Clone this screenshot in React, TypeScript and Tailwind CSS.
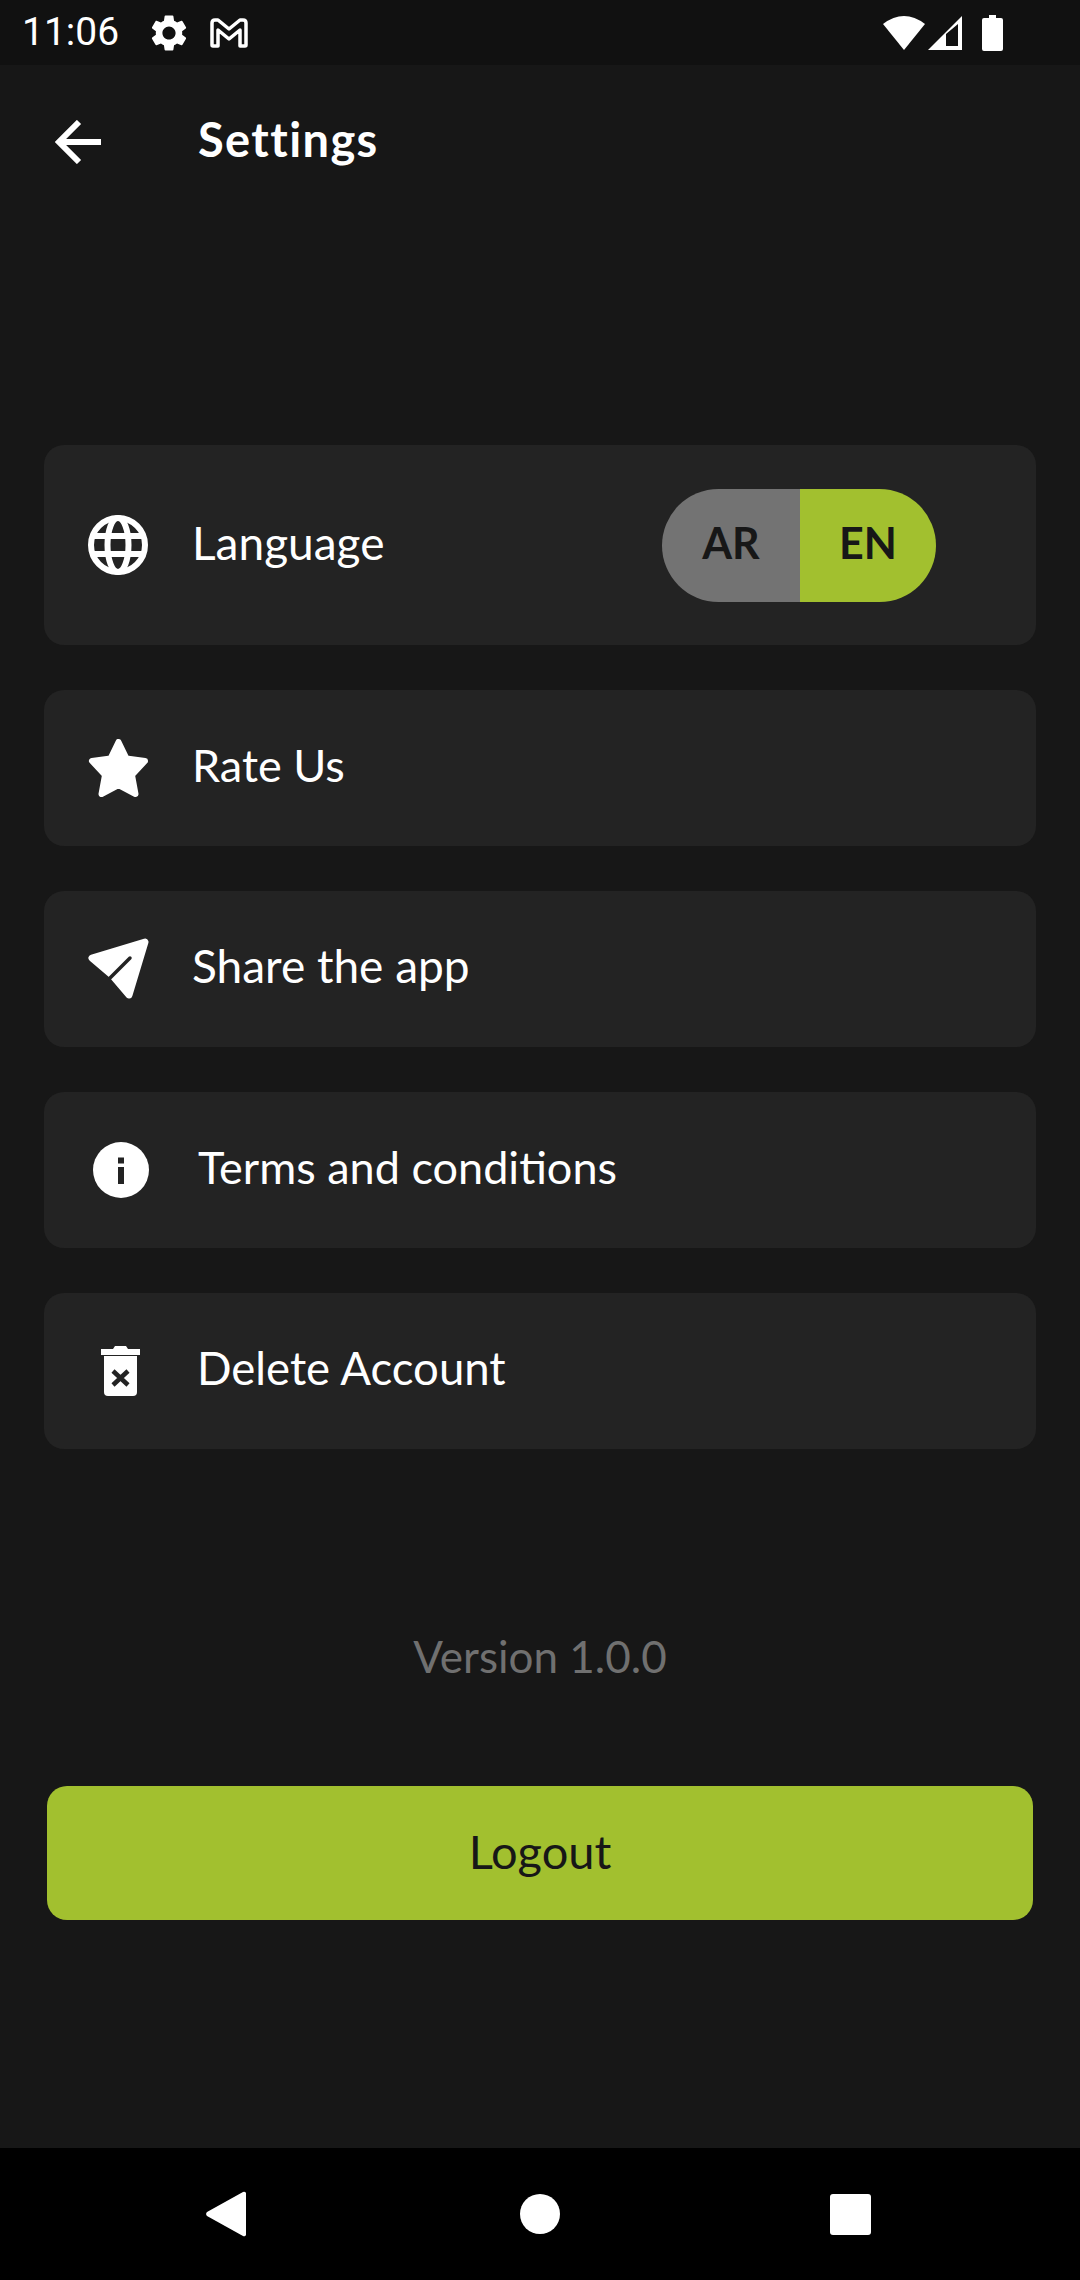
import { MdSettings } from "react-icons/md";
import type { ReactNode } from "react";

const Globe = () => (
  <svg width="60" height="60" viewBox="0 0 60 60" fill="none" stroke="#fff" strokeWidth="6">
    <circle cx="30" cy="30" r="27" />
    <ellipse cx="30" cy="30" rx="10.500" ry="27" />
    <path d="M5 21h50M5 39h50" />
  </svg>
);

const Star = () => (
  <svg width="61" height="58" viewBox="0 0 61 58" fill="#fff" stroke="#fff" strokeWidth="6" strokeLinejoin="round">
    <path d="M30.500 3 38.500 19.500 57 22 44 36 47.500 55 30.500 46 13.500 55 17 36 4 22 22.500 19.500Z" />
  </svg>
);

const Send = () => (
  <svg width="61" height="62" viewBox="0 0 61 62" fill="#fff">
    <path d="M4 20 57 4 41 57 24 37Z" stroke="#fff" strokeWidth="7" strokeLinejoin="round" />
    <path d="M42 20 22 40" stroke="#232323" strokeWidth="3.500" strokeLinecap="round" />
  </svg>
);

const Info = () => (
  <svg width="56" height="56" viewBox="0 0 56 56">
    <circle cx="28" cy="28" r="28" fill="#fff" />
    <rect x="25" y="15.500" width="6" height="6" fill="#232323" />
    <rect x="25" y="25" width="6" height="17" fill="#232323" />
  </svg>
);

const Trash = () => (
  <svg width="39" height="50" viewBox="0 0 39 50" fill="#fff">
    <path d="M0 3h12l2-3h11l2 3h12v6H0z" />
    <path d="M3 10h33v36a4 4 0 0 1-4 4H7a4 4 0 0 1-4-4z" />
    <path d="M12 25 27 39M27 25 12 39" stroke="#232323" strokeWidth="4.500" />
  </svg>
);

const Row = ({ icon, label, iconClass, labelClass }: { icon: ReactNode; label: string; iconClass: string; labelClass: string }) => (
  <div className="flex h-[156px] items-center rounded-[20px] bg-[#232323]">
    <div className={iconClass}>{icon}</div>
    <span className={labelClass}>{label}</span>
  </div>
);

export default function App() {
  return (
    <div className="flex h-[2280px] w-[1080px] flex-col overflow-hidden bg-[#171717] font-['Lato',sans-serif] text-white">
      {/* status bar */}
      <div className="flex h-[65px] shrink-0 items-center bg-[#111111] pl-[22px]">
        <span className="w-[125px] font-['Roboto',sans-serif] text-[39px] leading-none">11:06</span>
        <MdSettings className="text-[44px]" />
        <svg className="ml-[19px]" width="38" height="30" viewBox="0 0 38 30" fill="none" stroke="#fff" strokeWidth="3.500" strokeLinejoin="round">
          <path d="M2 27V5Q2 2 5 2H8L19 11 30 2H33Q36 2 36 5V27Q36 28 35 28H30V12L19 21 8 12V28H3Q2 28 2 27Z" />
        </svg>
        <svg className="ml-[635px]" width="42" height="34" viewBox="0 0 42 34" fill="#fff">
          <path d="M21 34 0 8Q21-8 42 8z" />
        </svg>
        <svg className="ml-[3px]" width="34" height="34" viewBox="0 0 34 34" fill="#fff">
          <path fillRule="evenodd" d="M0 34 34 0v34zM18 30h12V8L18 18z" />
        </svg>
        <svg className="ml-[20px]" width="21" height="36" viewBox="0 0 21 36" fill="#fff">
          <path d="M7 0h7v3h5a2 2 0 0 1 2 2v29a2 2 0 0 1-2 2H2a2 2 0 0 1-2-2V5a2 2 0 0 1 2-2h5z" />
        </svg>
      </div>

      <div className="flex min-h-0 flex-1 flex-col">
        {/* header */}
        <div className="flex h-[150px] items-center pb-[2px] pl-[55px]">
          <svg className="mt-[6px]" width="46" height="44" viewBox="0 0 46 44" fill="none" stroke="#fff" strokeWidth="6">
            <path d="M24 2 4 22l20 20M4 22h42" />
          </svg>
          <h1 className="ml-[97px] text-[47px] leading-none font-bold tracking-[1.4px]">Settings</h1>
        </div>

        <div className="mx-[44px] mt-[230px] flex flex-col gap-[45px]">
          <div className="flex h-[200px] items-center rounded-[20px] bg-[#232323]">
            <div className="ml-[44px] flex">
              <Globe />
            </div>
            <span className="ml-[44px] pb-[4px] text-[46px] leading-none">Language</span>
            <div className="mr-[100px] ml-auto flex h-[113px] w-[274px] overflow-hidden rounded-full text-[43px] font-bold text-[#171717]">
              <div className="flex w-[138px] items-center justify-center bg-[#737373] pb-[4px]">AR</div>
              <div className="flex w-[136px] items-center justify-center bg-[#a2c02f] pb-[4px]">EN</div>
            </div>
          </div>
          <Row icon={<Star />} label="Rate Us" iconClass="ml-[44px] flex" labelClass="ml-[43px] pb-[6px] text-[45px] leading-none" />
          <Row icon={<Send />} label="Share the app" iconClass="ml-[44px] flex" labelClass="ml-[43px] pb-[6px] text-[46px] leading-none" />
          <Row icon={<Info />} label="Terms and conditions" iconClass="ml-[49px] flex" labelClass="ml-[49px] pb-[6px] text-[45px] leading-none" />
          <Row icon={<Trash />} label="Delete Account" iconClass="ml-[57px] flex" labelClass="ml-[57px] pb-[6px] text-[45.500px] leading-none" />
        </div>

        <p className="mt-[182px] text-center text-[44px] leading-[50px] text-[#707070]">Version 1.0.0</p>

        <div className="mx-[47px] mt-[105px] flex h-[134px] items-center justify-center rounded-[20px] bg-[#a2c02f] pb-[4px] text-[47px] text-[#171717]">
          Logout
        </div>
      </div>

      {/* nav bar */}
      <div className="flex h-[132px] shrink-0 items-center bg-black pl-[206px]">
        <svg width="40" height="46" viewBox="0 0 40 46" fill="#fff">
          <path d="M37 1a2 2 0 0 1 3 2v40a2 2 0 0 1-3 2L1 25a3 3 0 0 1 0-4z" />
        </svg>
        <div className="ml-[274px] h-[40px] w-[40px] rounded-full bg-white" />
        <div className="ml-[270px] h-[41px] w-[41px] rounded-[3px] bg-white" />
      </div>
    </div>
  );
}
